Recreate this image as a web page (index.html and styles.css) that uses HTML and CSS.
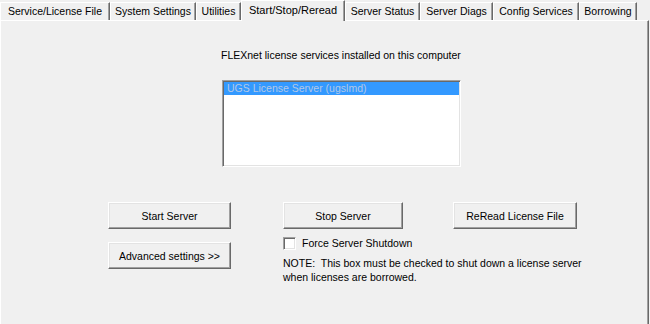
FILE: index.html
```html
<!DOCTYPE html>
<html>
<head>
<meta charset="utf-8">
<link rel="stylesheet" href="styles.css">
</head>
<body>
<div class="window">
  <div class="tabs">
    <div class="tab w1">Service/License File</div>
    <div class="tab w2">System Settings</div>
    <div class="tab w3">Utilities</div>
    <div class="tab active w4">Start/Stop/Reread</div>
    <div class="tab w5">Server Status</div>
    <div class="tab w6">Server Diags</div>
    <div class="tab w7">Config Services</div>
    <div class="tab w8">Borrowing</div>
  </div>
  <div class="panel">
    <div class="services">
      <div class="heading">FLEXnet license services installed on this computer</div>
      <div class="listbox">
        <div class="item selected">UGS License Server (ugslmd)</div>
      </div>
    </div>
    <div class="controls">
      <button class="btn b-start">Start Server</button>
      <button class="btn b-stop">Stop Server</button>
      <button class="btn b-reread">ReRead License File</button>
      <button class="btn b-adv">Advanced settings &gt;&gt;</button>
      <div class="shutdown">
        <label class="check"><span class="box"></span><span>Force Server Shutdown</span></label>
        <p class="note">NOTE:&nbsp; This box must be checked to shut down a license server<br>when licenses are borrowed.</p>
      </div>
    </div>
  </div>
</div>
</body>
</html>
```
FILE: styles.css
```css
* { box-sizing: border-box; }
html, body { margin: 0; padding: 0; }
body {
  background: #f0f0f0;
  font-family: "Liberation Sans", Arial, sans-serif;
  font-size: 10.5px;
  color: #000;
  width: 650px;
  height: 324px;
  overflow: hidden;
}
.window { display: flex; flex-direction: column; height: 324px; }
.tabs {
  display: flex;
  height: 20px;
  align-items: flex-end;
  position: relative;
  z-index: 2;
}
.tab {
  height: 18px;
  border-top: 1px solid #fff;
  border-left: 1px solid #fff;
  border-right: 1px solid #696969;
  box-shadow: inset -1px 0 #a0a0a0;
  display: flex;
  align-items: center;
  justify-content: center;
  padding-bottom: 1px;
  white-space: nowrap;
}
.tab.active {
  height: 21px;
  margin-bottom: -1px;
  background: #f0f0f0;
  padding-bottom: 3px;
  font-size: 11px;
}
.w1 { width: 110px; }
.w2 { width: 86px; }
.w3 { width: 45px; }
.w4 { width: 104px; }
.w5 { width: 75px; }
.w6 { width: 73px; }
.w7 { width: 86px; }
.w8 { width: 58px; }
.panel {
  flex: 1;
  border-top: 1px solid #fff;
  border-left: 1px solid #fff;
  border-right: 1px solid #696969;
  box-shadow: inset -1px 0 #a0a0a0;
  margin-right: 1px;
  padding-top: 27px;
}
.services { margin-left: 220px; width: 240px; }
.heading { height: 14px; line-height: 14px; white-space: nowrap; }
.listbox {
  margin-top: 18px;
  margin-left: 1px;
  width: 239px;
  height: 87px;
  background: #fff;
  border-top: 1px solid #a0a0a0;
  border-left: 1px solid #a0a0a0;
  border-bottom: 1px solid #fff;
  border-right: 1px solid #fff;
  box-shadow: inset 1px 1px #696969, inset -1px -1px #e3e3e3;
  padding: 1px 1px;
}
.item { height: 13px; line-height: 13px; padding-left: 3px; }
.item.selected { background: #3399ff; color: #b4c8e6; }
.controls {
  margin-top: 35px;
  display: grid;
  grid-template-columns: 123px 120px 122px;
  grid-template-rows: 27px auto;
  column-gap: 52px;
  row-gap: 13px;
  margin-left: 107px;
}
.b-start { grid-column: 1; grid-row: 1; }
.b-stop { grid-column: 2; grid-row: 1; }
.b-reread { grid-column: 3; grid-row: 1; margin-left: -2px; }
.b-adv { grid-column: 1; grid-row: 2; height: 27px; }
.shutdown { grid-column: 2 / 4; grid-row: 2; margin-top: -6px; white-space: nowrap; }
.btn {
  font: inherit;
  color: #000;
  background: #f0f0f0;
  border-top: 1px solid #fff;
  border-left: 1px solid #fff;
  border-right: 1px solid #696969;
  border-bottom: 1px solid #696969;
  box-shadow: inset -1px -1px #a0a0a0, inset 1px 1px #e3e3e3;
  height: 27px;
  padding: 0;
  border-radius: 0;
}
.check { display: flex; align-items: center; gap: 6px; height: 14px; }
.box {
  width: 13px;
  height: 13px;
  background: #fff;
  border-top: 1px solid #a0a0a0;
  border-left: 1px solid #a0a0a0;
  border-bottom: 1px solid #fff;
  border-right: 1px solid #fff;
  box-shadow: inset 1px 1px #696969, inset -1px -1px #e3e3e3;
}
.note { margin: 6px 0 0 0; line-height: 14px; }
```
